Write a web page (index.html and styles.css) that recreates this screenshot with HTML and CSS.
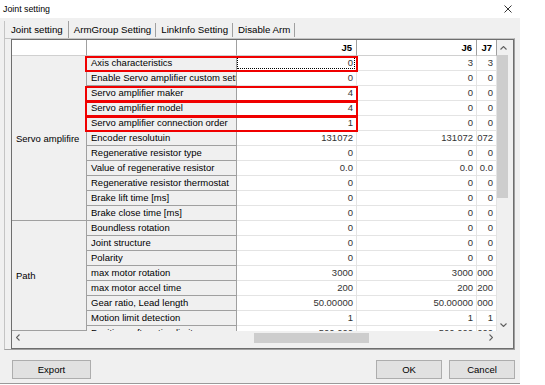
FILE: index.html
```html
<!DOCTYPE html>
<html>
<head>
<meta charset="utf-8">
<link rel="stylesheet" href="styles.css">
</head>
<body>
<div class="dialog">
  <div class="titlebar">
    <span class="title">Joint setting</span>
    <svg class="close" width="8" height="8" viewBox="0 0 8 8"><path d="M0.5 0.5L7.5 7.5M7.5 0.5L0.5 7.5" stroke="#333" stroke-width="1" fill="none"/></svg>
  </div>
  <div class="tabs">
    <div class="tab active">Joint setting</div>
    <div class="tab">ArmGroup Setting</div>
    <div class="tab">LinkInfo Setting</div>
    <div class="tab">Disable Arm</div>
  </div>
  <div class="panel">
    <div class="gridbox">
      <div class="gtop">
        <div class="gbody">
          <div class="hdr">
            <div class="hc c-grp"></div>
            <div class="hc c-name"></div>
            <div class="hc c-j5">J5</div>
            <div class="hc c-j6">J6</div>
            <div class="hc c-j7">J7</div>
          </div>
          <div class="main">
            <div class="groups">
              <div class="grp g1">Servo amplifire</div>
              <div class="grp g2">Path</div>
            </div>
            <div class="rows">
              <div class="row"><div class="nm">Axis characteristics</div><div class="v j5 focus"><span>0</span></div><div class="v j6"><span>3</span></div><div class="v j7"><span>3</span></div><i class="mark"></i></div>
              <div class="row"><div class="nm">Enable Servo amplifier custom setting</div><div class="v j5"><span>0</span></div><div class="v j6"><span>0</span></div><div class="v j7"><span>0</span></div></div>
              <div class="row"><div class="nm">Servo amplifier maker</div><div class="v j5"><span>4</span></div><div class="v j6"><span>0</span></div><div class="v j7"><span>0</span></div><i class="mark"></i></div>
              <div class="row"><div class="nm">Servo amplifier model</div><div class="v j5"><span>4</span></div><div class="v j6"><span>0</span></div><div class="v j7"><span>0</span></div><i class="mark"></i></div>
              <div class="row"><div class="nm">Servo amplifier connection order</div><div class="v j5"><span>1</span></div><div class="v j6"><span>0</span></div><div class="v j7"><span>0</span></div><i class="mark"></i></div>
              <div class="row"><div class="nm">Encoder resolutuin</div><div class="v j5"><span>131072</span></div><div class="v j6"><span>131072</span></div><div class="v j7"><span>131072</span></div></div>
              <div class="row"><div class="nm">Regenerative resistor type</div><div class="v j5"><span>0</span></div><div class="v j6"><span>0</span></div><div class="v j7"><span>0</span></div></div>
              <div class="row"><div class="nm">Value of regenerative resistor</div><div class="v j5"><span>0.0</span></div><div class="v j6"><span>0.0</span></div><div class="v j7"><span>0.0</span></div></div>
              <div class="row"><div class="nm">Regenerative resistor thermostat</div><div class="v j5"><span>0</span></div><div class="v j6"><span>0</span></div><div class="v j7"><span>0</span></div></div>
              <div class="row"><div class="nm">Brake lift time [ms]</div><div class="v j5"><span>0</span></div><div class="v j6"><span>0</span></div><div class="v j7"><span>0</span></div></div>
              <div class="row"><div class="nm">Brake close time [ms]</div><div class="v j5"><span>0</span></div><div class="v j6"><span>0</span></div><div class="v j7"><span>0</span></div></div>
              <div class="row"><div class="nm">Boundless rotation</div><div class="v j5"><span>0</span></div><div class="v j6"><span>0</span></div><div class="v j7"><span>0</span></div></div>
              <div class="row"><div class="nm">Joint structure</div><div class="v j5"><span>0</span></div><div class="v j6"><span>0</span></div><div class="v j7"><span>0</span></div></div>
              <div class="row"><div class="nm">Polarity</div><div class="v j5"><span>0</span></div><div class="v j6"><span>0</span></div><div class="v j7"><span>0</span></div></div>
              <div class="row"><div class="nm">max motor rotation</div><div class="v j5"><span>3000</span></div><div class="v j6"><span>3000</span></div><div class="v j7"><span>3000</span></div></div>
              <div class="row"><div class="nm">max motor accel time</div><div class="v j5"><span>200</span></div><div class="v j6"><span>200</span></div><div class="v j7"><span>200</span></div></div>
              <div class="row"><div class="nm">Gear ratio, Lead length</div><div class="v j5"><span>50.00000</span></div><div class="v j6"><span>50.00000</span></div><div class="v j7"><span>50.00000</span></div></div>
              <div class="row"><div class="nm">Motion limit detection</div><div class="v j5"><span>1</span></div><div class="v j6"><span>1</span></div><div class="v j7"><span>1</span></div></div>
              <div class="row"><div class="nm">Positive soft motion limit</div><div class="v j5"><span>500.000</span></div><div class="v j6"><span>500.000</span></div><div class="v j7"><span>500.000</span></div></div>
            </div>
          </div>
        </div>
        <div class="vscroll">
          <div class="sbtn up"><svg width="7" height="4" viewBox="0 0 7 4"><path d="M0.5 3.5L3.5 0.5L6.5 3.5" stroke="#606060" stroke-width="1.1" fill="none"/></svg></div>
          <div class="vthumb"></div>
          <div class="vspace"></div>
          <div class="sbtn down"><svg width="7" height="4" viewBox="0 0 7 4"><path d="M0.5 0.5L3.5 3.5L6.5 0.5" stroke="#606060" stroke-width="1.1" fill="none"/></svg></div>
        </div>
      </div>
      <div class="gbot">
        <div class="hscroll">
          <div class="hbtn"><svg width="4" height="7" viewBox="0 0 4 7"><path d="M3.5 0.5L0.5 3.5L3.5 6.5" stroke="#606060" stroke-width="1.1" fill="none"/></svg></div>
          <div class="htrack"><div class="hthumb"></div></div>
          <div class="hbtn"><svg width="4" height="7" viewBox="0 0 4 7"><path d="M0.5 0.5L3.5 3.5L0.5 6.5" stroke="#606060" stroke-width="1.1" fill="none"/></svg></div>
        </div>
        <div class="corner"></div>
      </div>
    </div>
  </div>
  <div class="footer">
    <button class="btn export">Export</button>
    <span class="spacer"></span>
    <button class="btn ok">OK</button>
    <button class="btn cancel">Cancel</button>
  </div>
</div>
</body>
</html>
```
FILE: styles.css
```css
html, body {
  margin: 0;
  padding: 0;
  background: #ffffff;
  font-family: "Liberation Sans", Arial, sans-serif;
  color: #000;
}

.dialog {
  width: 520px;
  height: 384px;
  box-sizing: border-box;
  background: #f0f0f0;
  border-bottom: 1px solid #9a9a9a;
  display: flex;
  flex-direction: column;
}

.titlebar {
  height: 18px;
  background: #ffffff;
  display: flex;
  align-items: center;
  justify-content: space-between;
  padding: 0 8px 0 3px;
  font-size: 8.8px;
}

.close {
  display: block;
}

.tabs {
  display: flex;
  height: 18px;
  margin-top: 2px;
  padding-left: 4px;
  font-size: 9.7px;
}

.tab {
  margin-top: 3px;
  height: 14px;
  line-height: 14px;
  padding: 0 4px 0 5px;
  border-right: 1px solid #a0a0a0;
  white-space: nowrap;
}

.tab.active {
  margin-top: 1px;
  height: 15px;
  padding-top: 2px;
  padding-left: 6px;
  padding-right: 5px;
  border-left: 1px solid #c4c4c4;
}

.panel {
  margin-left: 4px;
  width: 511px;
  height: 312px;
  box-sizing: border-box;
  border: 1px solid;
  border-color: #c4c4c4 #a0a0a0 #a0a0a0 #c4c4c4;
  padding-left: 6px;
}

.gridbox {
  width: 503px;
  height: 310px;
  box-sizing: border-box;
  border: 1px solid #6e6e6e;
  display: flex;
  flex-direction: column;
  font-size: 9.5px;
}

.gtop {
  display: flex;
  height: 291px;
}

.gbody {
  width: 485px;
  height: 291px;
  overflow: hidden;
  background: #ffffff;
}

.hdr {
  display: flex;
  height: 16px;
}

.hc {
  box-sizing: border-box;
  height: 16px;
  border-right: 1px solid #a0a0a0;
  border-bottom: 1px solid #d0d0d0;
  background: #ffffff;
  font-weight: bold;
  text-align: right;
  padding: 1px 4px 0 0;
  line-height: 14px;
}

.c-grp { width: 75px; }
.c-name { width: 150px; }
.c-j5 { width: 120px; }
.c-j6 { width: 120px; }
.c-j7 { width: 20px; }

.main {
  display: flex;
  height: 275px;
}

.groups {
  width: 75px;
  display: flex;
  flex-direction: column;
  flex-shrink: 0;
}

.grp {
  box-sizing: border-box;
  background: #f0f0f0;
  border-right: 1px solid #a0a0a0;
  border-bottom: 1px solid #a0a0a0;
  display: flex;
  align-items: center;
  padding-left: 4px;
  white-space: nowrap;
}

.g1 { height: 165px; flex-shrink: 0; }
.g2 { flex: 1; }

.rows {
  width: 410px;
  flex-shrink: 0;
}

.row {
  display: flex;
  height: 15px;
  position: relative;
}

.nm {
  width: 150px;
  flex-shrink: 0;
  box-sizing: border-box;
  background: #f0f0f0;
  border-right: 1px solid #a0a0a0;
  border-bottom: 1px solid #a0a0a0;
  padding-left: 4px;
  line-height: 14px;
  white-space: nowrap;
  overflow: hidden;
}

.v {
  flex-shrink: 0;
  box-sizing: border-box;
  background: #ffffff;
  border-right: 1px solid #e4e4e4;
  border-bottom: 1px solid #e4e4e4;
  display: flex;
  justify-content: flex-end;
  padding-right: 3px;
  overflow: hidden;
  line-height: 14px;
  color: #333;
  white-space: nowrap;
  position: relative;
}

.v span { flex-shrink: 0; }

.v.j5 { width: 120px; }
.v.j6 { width: 120px; }
.v.j7 { width: 20px; }

.focus::after {
  content: "";
  position: absolute;
  left: 0;
  top: 1px;
  right: 1px;
  bottom: 1px;
  border: 1px dotted #000;
}

.mark {
  position: absolute;
  left: -2px;
  top: 0;
  width: 273px;
  height: 16px;
  box-sizing: border-box;
  border: 2px solid #f00000;
  z-index: 2;
}

.vscroll {
  width: 12px;
  display: flex;
  flex-direction: column;
  background: #f0f0f0;
}

.sbtn {
  display: flex;
  justify-content: center;
  align-items: center;
}

.sbtn svg, .hbtn svg { display: block; }

.sbtn.up { height: 15px; }
.sbtn.down { height: 13px; }

.vthumb {
  width: 11px;
  height: 143px;
  background: #cdcdcd;
}

.vspace { flex: 1; }

.gbot {
  display: flex;
  height: 13px;
}

.hscroll {
  width: 485px;
  display: flex;
  background: #f0f0f0;
}

.hbtn {
  width: 12px;
  display: flex;
  justify-content: center;
  align-items: center;
}

.htrack {
  flex: 1;
}

.hthumb {
  margin-left: 230px;
  margin-top: 2px;
  width: 115px;
  height: 10px;
  background: #cdcdcd;
}

.corner {
  width: 12px;
}

.footer {
  display: flex;
  padding: 10px 5px 0 12px;
}

.spacer { flex: 1; }

.btn {
  height: 19px;
  box-sizing: border-box;
  background: #e1e1e1;
  border: 1px solid #adadad;
  font-family: "Liberation Sans", Arial, sans-serif;
  font-size: 9.5px;
  color: #000;
  padding: 0;
  margin: 0;
}

.export { width: 79px; }
.ok { width: 66px; }
.cancel { width: 66px; margin-left: 7px; }
```
